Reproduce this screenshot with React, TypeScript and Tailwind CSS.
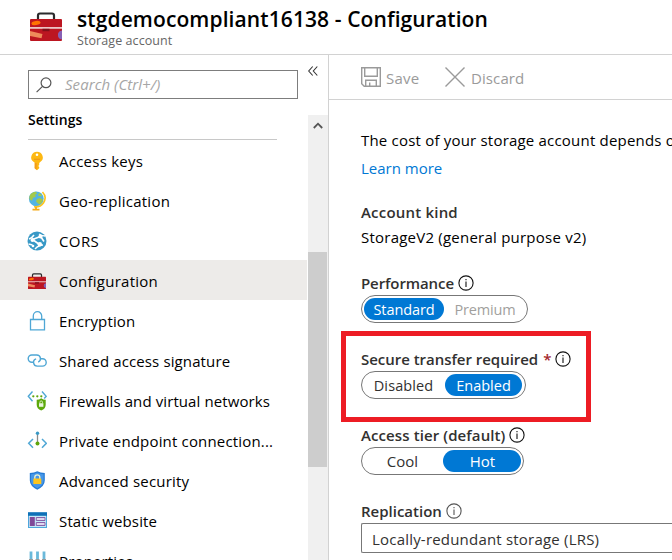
import type { ReactNode } from "react";

function Toolbox({ className }: { className: string }) {
  return (
    <svg viewBox="0 0 32 29" className={className} preserveAspectRatio="none">
      <path d="M8 8V3.500q0-2 2-2h12q2 0 2 2V8" fill="none" stroke="#2b2b2d" strokeWidth="2.2" />
      <rect x="0" y="7" width="32" height="22" rx="1" fill="#bc1621" />
      <ellipse cx="6" cy="11" rx="4.6" ry="2.1" fill="#ff7300" transform="rotate(-8 6 11)" />
      <rect x="0" y="15" width="32" height="1.8" fill="#ecc5c4" />
      <rect x="12.5" y="16.8" width="7" height="2.4" fill="#7e1119" />
      <path d="M0 19l12.500 3-1 4.300L0 24z" fill="#ee8a5b" />
      <path d="M32 19.500a4 3.600 0 0 0 0 7z" fill="#8661b5" stroke="#8661b5" strokeWidth="2" />
    </svg>
  );
}

function Glyph({ children }: { children: ReactNode }) {
  return (
    <svg viewBox="0 0 20 20" className="h-5 w-5" fill="none">
      {children}
    </svg>
  );
}

const keyIcon = (
  <Glyph>
    <path d="M10 .8a6 5.600 0 0 0-3.500 10l1.200 1v5.400L10 19.200l2.200-2v-1.300l-1-1 1-1v-2l1.300-1.100A6 5.600 0 0 0 10 .8z" fill="#fdb813" />
    <path d="M7.800 12h1.900v6.900L7.700 17.200z" fill="#f29b1d" />
    <circle cx="10" cy="3.700" r="1.300" fill="#fff" />
    <path d="M7 8.300h6" stroke="#ef9a17" strokeWidth="1.200" />
  </Glyph>
);

const globeIcon = (
  <Glyph>
    <circle cx="9.300" cy="7.800" r="7.400" fill="#53b4e2" />
    <path d="M3 4q2-3 6-3.200l1 2-2 1 1 2-3 1-1 3-2.500-1.500Q2 6 3 4zM10 8l3-1 3 1.500q-.5 3-3 5l-2-1-2-2zM12 2l3 2-1 1.500-3-1z" fill="#a4c94b" />
    <path d="M15.500 1q4.800 5 .9 11-3 4.500-9.400 3.800" stroke="#fdc51c" strokeWidth="1.600" />
    <path d="M9 16v2M5.500 18.700h7" stroke="#f5aa16" strokeWidth="1.800" />
  </Glyph>
);

const corsIcon = (
  <Glyph>
    <circle cx="10" cy="10" r="9.500" fill="#3999c6" />
    <path d="M2 8q3-1 5-4M12 3q3 2 6 2M1.500 13l4 1M8 18q4-4 8-4" stroke="#fff" strokeWidth="1.500" />
    <path d="M5.500 8.500l8-3M5.500 8.500l7 5M14 6l3 4.500" stroke="#fff" strokeWidth="1.600" />
    <circle cx="5.500" cy="9" r="2" fill="#fff" />
    <circle cx="13.500" cy="5.500" r="2.100" fill="#fff" />
    <circle cx="12.800" cy="13.300" r="2.200" fill="#fff" />
    <circle cx="6" cy="15" r="1.300" fill="#fff" />
  </Glyph>
);

const lockIcon = (
  <Glyph>
    <path d="M3.500 8.500h14v10.300h-14zM6.300 8.500V5a4.200 4.300 0 0 1 8.400 0v3.500" stroke="#4fa7d5" strokeWidth="1.300" />
  </Glyph>
);

const linkIcon = (
  <Glyph>
    <path d="M6.800 11.200H4.800A3.600 3.600 0 0 1 4.800 4h5a3.700 3.700 0 0 1 1.400 7.100" stroke="#4fa7d5" strokeWidth="1.400" />
    <path d="M13.200 7.700H15.500a3.700 3.700 0 0 1 0 7.400h-5a3.700 3.700 0 0 1-1.400-7.200" stroke="#4fa7d5" strokeWidth="1.400" />
  </Glyph>
);

const firewallIcon = (
  <Glyph>
    <path d="M5.500.500L1.300 5.300l4.200 4.900M15 .5l4.200 4.800-2 2.200" stroke="#4fa7d5" strokeWidth="1.400" />
    <circle cx="6.300" cy="5.300" r="1.150" fill="#5ea60c" />
    <circle cx="10.300" cy="5.300" r="1.150" fill="#5ea60c" />
    <circle cx="14.300" cy="5.300" r="1.150" fill="#5ea60c" />
    <path d="M9.700 8.800q2.700 0 4.500-1.500 1.800 1.500 4.500 1.500v5q0 4-4.500 5.700-4.500-1.700-4.500-5.700z" fill="#5da90b" />
    <path d="M12 12.200h4.400v3.600H12z" fill="#e9f5dd" />
    <path d="M12.900 12.200v-1a1.300 1.300 0 0 1 2.600 0v1" stroke="#e9f5dd" strokeWidth=".8" />
  </Glyph>
);

const endpointIcon = (
  <Glyph>
    <path d="M6 8L1.700 12.300 6 16.800M15 8l4.300 4.300-4.300 4.500" stroke="#4fa7d5" strokeWidth="1.500" />
    <path d="M10.500 2v10" stroke="#8a8a8a" strokeWidth="1.300" />
    <circle cx="10.500" cy="2.300" r="1.700" fill="#3999c6" />
    <circle cx="10.500" cy="12.400" r="2" fill="#5ea60c" />
  </Glyph>
);

const shieldIcon = (
  <Glyph>
    <path d="M10.300 .2q3 1.800 7.500 1.800v7.200q0 5.800-7.500 9.500-7.500-3.700-7.500-9.500V2Q7.300 2 10.300 .2z" fill="#257bd5" />
    <path d="M10.300 1.500q3 1.500 6.300 1.700v6q0 4.800-6.300 8.100-6.300-3.300-6.300-8.100v-6Q7.300 3 10.300 1.500z" fill="#4797e8" />
    <path d="M7.800 8V6.300a2.500 2.500 0 0 1 5 0V8" stroke="#eef4d0" strokeWidth="1.300" />
    <rect x="6.300" y="7.500" width="8" height="5.500" rx=".6" fill="#fdc51d" />
  </Glyph>
);

const siteIcon = (
  <Glyph>
    <rect x="1.500" y="2" width="18" height="14.500" fill="#c5e8f8" stroke="#4fa7dc" />
    <rect x="1" y="1.300" width="19" height="3.500" fill="#0f70b7" />
    <rect x="2.800" y="6" width="5" height="9" fill="#804998" />
    <path d="M9.300 6.500H18v3H9.300zM9.300 11.500H18v3H9.300z" fill="#dfd6ee" stroke="#8055a2" strokeWidth=".9" />
  </Glyph>
);

const propertiesIcon = (
  <Glyph>
    <path d="M4 .500v8M10.500.500v8M17 .500v8" stroke="#6bb9da" strokeWidth="2.800" />
    <path d="M4 8v10M10.500 8v10M17 8v10" stroke="#9a9a9a" strokeWidth="4" />
  </Glyph>
);

const items = [
  { label: "Access keys", icon: keyIcon, tracking: "tracking-[0.25px]" },
  { label: "Geo-replication", icon: globeIcon, tracking: "tracking-[0.25px]" },
  { label: "CORS", icon: corsIcon, tracking: "tracking-[0.4px]" },
  { label: "Configuration", icon: <Toolbox className="h-4 w-[18px]" />, tracking: "tracking-[0.26px]", selected: true },
  { label: "Encryption", icon: lockIcon, tracking: "tracking-[0.15px]" },
  { label: "Shared access signature", icon: linkIcon, tracking: "tracking-[0.12px]" },
  { label: "Firewalls and virtual networks", icon: firewallIcon, tracking: "tracking-[0.1px]" },
  { label: "Private endpoint connection...", icon: endpointIcon, tracking: "tracking-[0.17px]" },
  { label: "Advanced security", icon: shieldIcon, tracking: "tracking-[0.18px]" },
  { label: "Static website", icon: siteIcon, tracking: "tracking-[0.15px]" },
  { label: "Properties", icon: propertiesIcon, tracking: "tracking-[0.15px]" },
];

function Info({ muted }: { muted?: boolean }) {
  return (
    <svg viewBox="0 0 16 16" className={muted ? "h-4 w-4 text-[#555]" : "h-4 w-4 text-[#111]"} fill="none" stroke="currentColor">
      <circle cx="8" cy="8" r="7.100" strokeWidth="1.100" />
      <path d="M8 6.500V12M8 4v1.300" strokeWidth="1.100" />
    </svg>
  );
}

function Label({ text, tracking, required, muted }: { text: string; tracking: string; required?: boolean; muted?: boolean }) {
  return (
    <div className="flex h-6 items-center font-semibold text-[#323130]">
      <span className={tracking}>{text}</span>
      {required && <span className="ml-[5px] w-[8px] text-[#a4262c]">*</span>}
      <span className="ml-1">
        <Info muted={muted} />
      </span>
    </div>
  );
}

export default function App() {
  return (
    <div className="flex h-[560px] w-[672px] flex-col overflow-hidden bg-white font-['Open_Sans','Noto_Sans',sans-serif] text-[15px] whitespace-nowrap text-black">
      <header className="flex h-[55px] shrink-0 border-b border-[#d2d2d2] pl-[30px]">
        <Toolbox className="mt-3 h-[29px] w-8" />
        <div className="ml-[15px] pt-[5px]">
          <h1 className="h-[27px] text-[21px] leading-[28px] font-semibold tracking-[0.1px]">stgdemocompliant16138 - Configuration</h1>
          <p className="text-[12.500px] leading-[17px] tracking-[0.08px] text-[#666]">Storage account</p>
        </div>
      </header>
      <div className="flex min-h-0 flex-1">
        <aside className="flex w-[329px] shrink-0 flex-col border-r border-[#d2d2d2]">
          <div className="flex h-[60px] shrink-0 pt-[15px] pl-7">
            <div className="flex h-[29px] w-[270px] items-center border border-[#7d7d7d] pl-[7px]">
              <svg viewBox="0 0 16 16" className="mt-px h-4 w-4" fill="none" stroke="#555" strokeWidth="1.200">
                <circle cx="10" cy="5.800" r="4.900" />
                <path d="M6.500 9.300L.6 15.200" />
              </svg>
              <span className="mb-px ml-[13px] tracking-[0.05px] text-[#a6a6a6] italic">Search (Ctrl+/)</span>
            </div>
            <svg viewBox="0 0 10 10" className="mt-[-4px] ml-[10px] h-[10px] w-[10px]" fill="none" stroke="#333" strokeWidth="1.100">
              <path d="M4.700.500L.7 5l4 4.500M9.300.500l-4 4.500 4 4.500" />
            </svg>
          </div>
          <div className="flex min-h-0 flex-1">
            <nav className="w-[307px] shrink-0 overflow-hidden">
              <h2 className="ml-7 flex h-[25px] w-[249px] items-start border-b border-[#c8c8c8] text-[14px] leading-[10px] font-semibold">Settings</h2>
              {items.map((item) => (
                <div key={item.label} className={item.selected ? "flex h-10 items-center bg-[#edebe9] pl-[27px]" : "flex h-10 items-center pl-[27px]"}>
                  <span className="mt-px flex h-5 w-5 items-center justify-center">{item.icon}</span>
                  <span className={"mt-[3px] ml-3 " + item.tracking}>{item.label}</span>
                </div>
              ))}
            </nav>
            <div className="ml-px flex w-5 flex-col bg-[#f0f0f0]">
              <div className="flex h-5 items-center justify-center">
                <svg viewBox="0 0 10 7" className="h-[7px] w-[10px]" fill="none" stroke="#555" strokeWidth="1.800">
                  <path d="M.8 6L5 1.700 9.200 6" />
                </svg>
              </div>
              <div className="mt-[117px] h-[215px] w-[19px] bg-[#cdcdcd]" />
            </div>
          </div>
        </aside>
        <main className="relative min-w-0 flex-1">
          <div className="flex h-[45px] items-center border-b border-[#d2d2d2] pl-8 text-[#9a9a9a]">
            <svg viewBox="0 0 20 20" className="h-5 w-5" fill="none" stroke="currentColor" strokeWidth="1.400">
              <path d="M.7.700h18.600v18.600H3.200L.7 16.800zM3.700.700v8.600h12.600V.700M4.700 19.300v-6h10.600v6M8.700 19v-3.500" />
            </svg>
            <span className="mt-[2px] ml-[5px] w-[34px] tracking-[0.2px]">Save</span>
            <svg viewBox="0 0 20 20" className="ml-[25px] h-5 w-5" fill="none" stroke="currentColor" strokeWidth="1.400">
              <path d="M.5.500l19 19M19.500.500l-19 19" />
            </svg>
            <span className="mt-[2px] ml-[6px] tracking-[0.1px]">Discard</span>
          </div>
          <div className="pt-[26px] pl-8">
            <p className="h-7 leading-7 tracking-[0.2px]">The cost of your storage account depends on the usage</p>
            <p className="h-7 leading-7 text-[#0078d4]">Learn more</p>
            <div className="mt-[18px] flex h-6 items-center font-semibold tracking-[0.2px] text-[#323130]">Account kind</div>
            <p className="h-[26px] leading-[26px] tracking-[0.23px]">StorageV2 (general purpose v2)</p>
            <div className="mt-[21px]">
              <Label text="Performance" tracking="tracking-[-0.1px]" />
              <div className="flex h-7 w-[167px] items-center rounded-full border border-[#777] px-[2px]">
                <span className="flex h-[22px] w-20 items-center justify-center rounded-full bg-[#0078d4] pt-px text-[14.500px] tracking-[-0.1px] text-white">Standard</span>
                <span className="flex-1 pt-px pl-px text-center text-[14.500px] tracking-[-0.2px] text-[#a19f9d]">Premium</span>
              </div>
            </div>
            <div className="mt-6">
              <Label text="Secure transfer required" tracking="tracking-[-0.03px]" required />
              <div className="flex h-7 w-[165px] items-center rounded-full border border-[#777] px-[3px]">
                <span className="flex-1 pt-px pr-[3px] text-center text-[14.500px] tracking-[0.1px] text-[#323130]">Disabled</span>
                <span className="flex h-[22px] w-[77px] items-center justify-center rounded-full bg-[#0078d4] pt-px text-[14.500px] text-white">Enabled</span>
              </div>
            </div>
            <div className="mt-6">
              <Label text="Access tier (default)" tracking="tracking-[0.1px]" />
              <div className="flex h-7 w-[163px] items-center rounded-full border border-[#777] px-[2px]">
                <span className="flex-1 pt-px pr-[2px] text-center text-[#323130]">Cool</span>
                <span className="flex h-[22px] w-[78px] items-center justify-center rounded-full bg-[#0078d4] pt-px pl-px text-white">Hot</span>
              </div>
            </div>
            <div className="mt-6">
              <Label text="Replication" tracking="tracking-[0px]" muted />
              <div className="flex h-[30px] items-center rounded-l-[2px] border border-r-0 border-[#777] pt-[3px] pl-[10px] tracking-[0.2px] text-[#323130]">Locally-redundant storage (LRS)</div>
            </div>
          </div>
          <div className="absolute top-[276px] left-3 h-[91px] w-[250px] border-5 border-[#ed1c24]" />
        </main>
      </div>
    </div>
  );
}
